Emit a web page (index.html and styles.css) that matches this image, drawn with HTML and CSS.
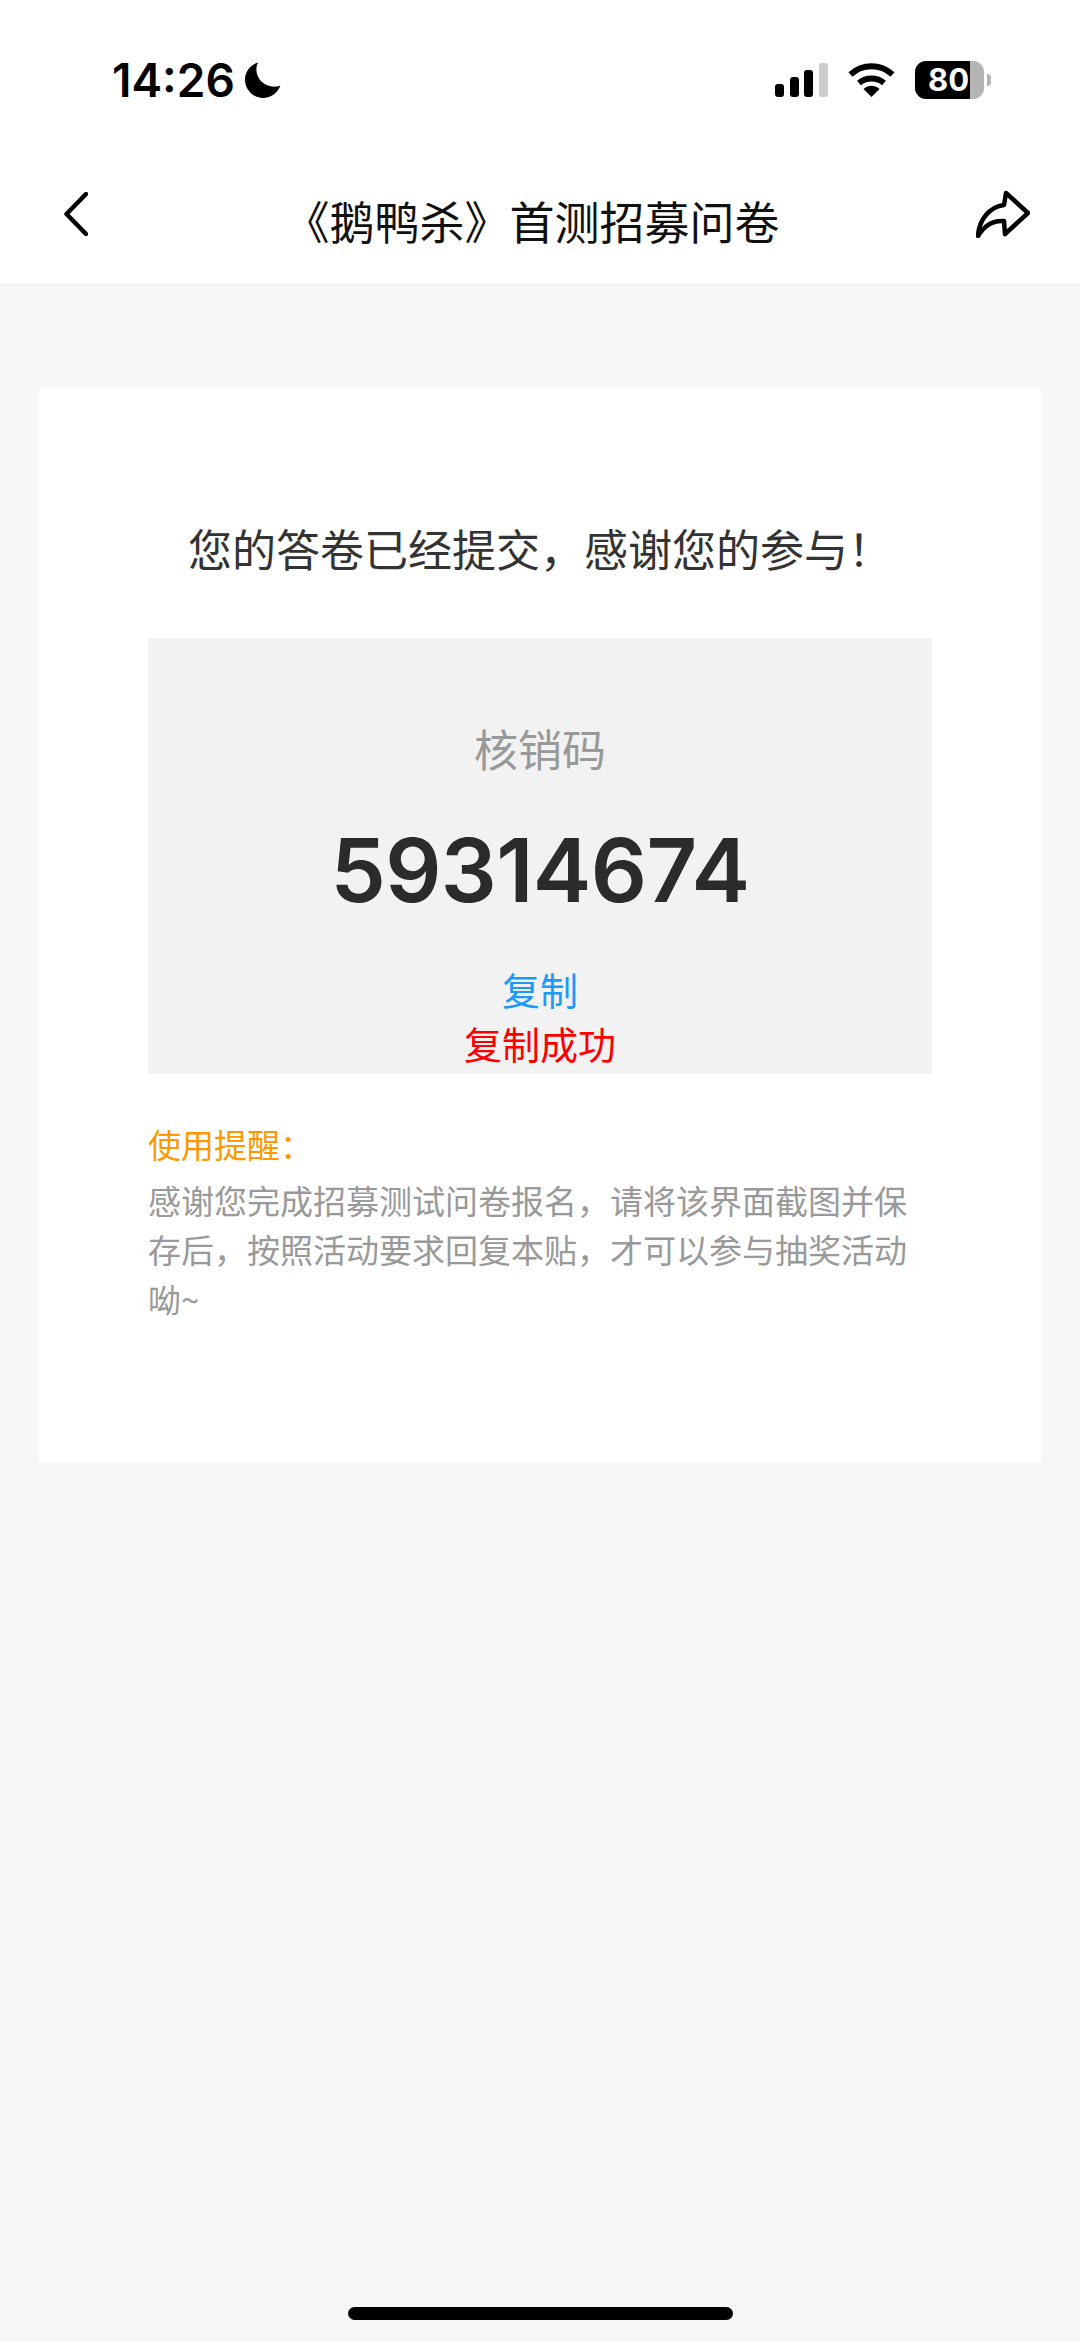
FILE: index.html
```html
<!DOCTYPE html>
<html lang="zh-CN">
<head>
  <meta charset="UTF-8">
  <meta name="viewport" content="width=device-width, initial-scale=1.0">
  <title>《鹅鸭杀》首测招募问卷</title>
  <link rel="stylesheet" href="styles.css">
</head>
<body>
  <div class="page">
    <header class="top">
      <div class="status">
        <div class="status-left">
          <span class="time">14:26</span>
          <svg class="moon" width="36" height="36" viewBox="0 0 36 36"><path d="M13 0.500C5.200 2.600 0 9.600 0 17.600 0 27.600 8 36 18 36c8 0 14.600-4.800 17.400-12.400-1.800 0.800-4 1.200-6.200 1.200C19.400 24.800 11.400 17.200 11.400 7.600c0-2.600 0.500-5 1.600-7.100z" fill="#000"/></svg>
        </div>
        <div class="status-right">
          <svg class="signal" width="53" height="34" viewBox="0 0 53 34">
            <rect x="0" y="21" width="9" height="13" rx="3" fill="#000"/>
            <rect x="15" y="14" width="9" height="20" rx="3" fill="#000"/>
            <rect x="29" y="7" width="9" height="27" rx="3" fill="#000"/>
            <rect x="44" y="0" width="9" height="34" rx="3" fill="#ccc"/>
          </svg>
          <svg class="wifi" width="47" height="34" viewBox="0 0 47 34">
            <path d="M2.500 11.500C14.500 0.500 32.500 0.500 44.500 11.500" fill="none" stroke="#000" stroke-width="6"/>
            <path d="M11 20C18 14 29 14 36 20" fill="none" stroke="#000" stroke-width="6"/>
            <path d="M15.500 26C20.500 21.800 26.500 21.800 31.500 26L23.500 34z" fill="#000"/>
          </svg>
          <div class="battery">
            <div class="battery-body"><span class="battery-num">80</span></div>
            <div class="battery-tip"></div>
          </div>
        </div>
      </div>
      <nav class="nav">
        <svg class="back" width="24" height="44" viewBox="0 0 24 44"><path d="M22 2L2.500 22 22 42" fill="none" stroke="#000" stroke-width="4.500" stroke-linecap="round" stroke-linejoin="round"/></svg>
        <h1 class="nav-title">《鹅鸭杀》首测招募问卷</h1>
        <svg class="share" width="54" height="48" viewBox="0 0 54 48"><path d="M30 3L52 23 29 44 28 31C17 30 8 36 2 46 3 30 13 17 28 15z" fill="none" stroke="#000" stroke-width="4.500" stroke-linejoin="round"/></svg>
      </nav>
    </header>

    <main class="content">
      <section class="card">
        <p class="done">您的答卷已经提交，感谢您的参与！</p>
        <div class="code-box">
          <p class="code-label">核销码</p>
          <p class="code-num">59314674</p>
          <p class="copy">复制</p>
          <p class="copied">复制成功</p>
        </div>
        <div class="tips">
          <p class="tips-title">使用提醒：</p>
          <p class="tips-text">感谢您完成招募测试问卷报名，请将该界面截图并保存后，按照活动要求回复本贴，才可以参与抽奖活动呦~</p>
        </div>
      </section>
    </main>

    <div class="home-bar"></div>
  </div>
</body>
</html>
```

FILE: styles.css
```css
* {
  box-sizing: border-box;
}

body {
  margin: 0;
  background: #f7f7f7;
  font-family: "Noto Sans CJK SC", "Noto Sans", sans-serif;
}

p, h1 {
  margin: 0;
}

.page {
  height: 2341px;
  display: flex;
  flex-direction: column;
}

.top {
  background: #fff;
  height: 283px;
}

.status {
  height: 160px;
  padding: 61px 89px 0 112px;
  display: flex;
  justify-content: space-between;
  align-items: flex-start;
}

.status-left {
  display: flex;
  align-items: center;
  gap: 10px;
}

.time {
  font-family: Inter, sans-serif;
  font-weight: 600;
  font-size: 46px;
  line-height: 38px;
  color: #000;
}

.status-right {
  display: flex;
  align-items: center;
  gap: 20px;
}

.signal {
  display: block;
}

.wifi {
  display: block;
}

.battery {
  display: flex;
  align-items: center;
  gap: 3px;
}

.battery-body {
  width: 69px;
  height: 38px;
  border-radius: 11px;
  background: linear-gradient(to right, #000 55px, #b5b5b5 55px);
  display: flex;
  align-items: center;
  padding-left: 13px;
}

.battery-num {
  font-family: Inter, sans-serif;
  font-weight: 700;
  font-size: 31px;
  line-height: 38px;
  color: #fff;
}

.battery-tip {
  width: 4px;
  height: 12px;
  border-radius: 0 4px 4px 0;
  background: #b5b5b5;
}

.nav {
  height: 123px;
  padding: 0 50px 0 64px;
  display: flex;
  justify-content: space-between;
  align-items: flex-start;
}

.back {
  margin-top: 32px;
}

.share {
  margin-top: 30px;
}

.nav-title {
  font-size: 45px;
  font-weight: 400;
  line-height: 60px;
  margin-top: 31px;
  color: #111;
}

.content {
  padding: 105px 39px 0;
}

.card {
  background: #fff;
  height: 1074px;
  padding: 0 109px;
}

.done {
  padding-top: 130px;
  font-size: 44px;
  line-height: 60px;
  color: #333;
  text-align: center;
  white-space: nowrap;
}

.code-box {
  margin-top: 60px;
  height: 436px;
  background: #f2f2f2;
  text-align: center;
  padding-top: 80px;
}

.code-label {
  font-size: 44px;
  line-height: 60px;
  color: #999;
}

.code-num {
  font-family: Inter, sans-serif;
  font-weight: 600;
  font-size: 88px;
  letter-spacing: -0.600px;
  line-height: 110px;
  color: #2b2b2b;
  margin-top: 37px;
}

.copy {
  font-size: 38px;
  line-height: 54px;
  color: #1b9af7;
  margin-top: 37px;
}

.copied {
  font-size: 38px;
  line-height: 54px;
  color: #f00;
}

.tips {
  margin-top: 46px;
  font-size: 33px;
  line-height: 49.500px;
}

.tips-title {
  color: #ff9800;
  margin-bottom: 6px;
}

.tips-text {
  color: #999;
}

.home-bar {
  width: 385px;
  height: 13px;
  border-radius: 7px;
  background: #000;
  margin: auto auto 21px;
}
```
